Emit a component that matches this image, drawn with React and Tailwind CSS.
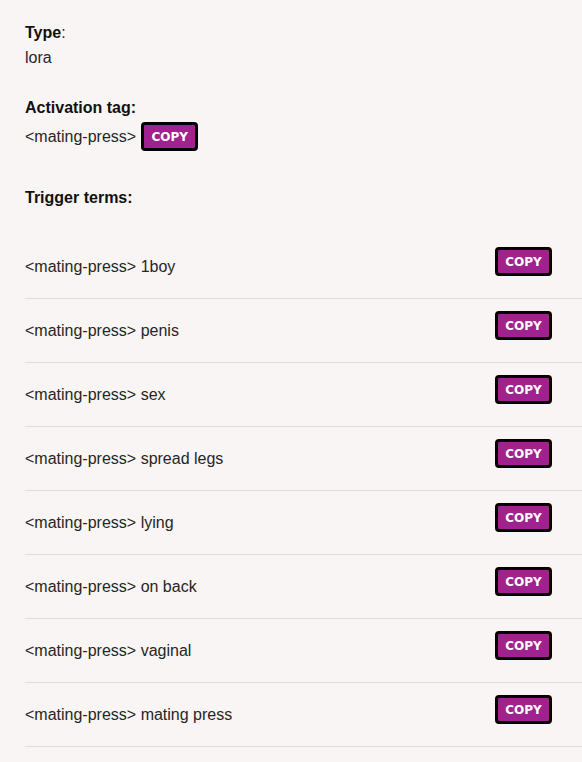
const terms = [
  "1boy",
  "penis",
  "sex",
  "spread legs",
  "lying",
  "on back",
  "vaginal",
  "mating press",
];

const tag = "<mating-press>";

function CopyButton({ className = "" }) {
  return (
    <button
      className={`h-[29px] w-[57px] shrink-0 rounded-[4px] border-[3px] border-black bg-[#a0228e] text-[12px] font-bold uppercase leading-none text-white font-['DejaVu_Sans',sans-serif] ${className}`}
    >
      Copy
    </button>
  );
}

export default function App() {
  return (
    <div className="min-h-[762px] w-full bg-[#f8f5f4] pl-[25px] pt-[21px] text-[16px] text-[#262626] font-['Liberation_Sans',Arial,sans-serif]">
      <div className="leading-6">
        <span className="font-bold text-[#111]">Type</span>:
      </div>
      <div className="mt-[1px] leading-6">lora</div>

      <div className="mt-[26px] font-bold leading-6 text-[#111]">
        Activation tag:
      </div>
      <div className="mt-[2px] flex items-center">
        <span className="leading-6">{tag}</span>
        <CopyButton className="ml-[5px]" />
      </div>

      <div className="mt-[35px] font-bold leading-6 text-[#111]">
        Trigger terms:
      </div>

      <ul className="mt-[25px]">
        {terms.map((t) => (
          <li
            key={t}
            className="flex h-[64px] items-start justify-between border-b border-[#e2dedd] pr-[30px]"
          >
            <span className="mt-[20px] leading-6">
              {tag} {t}
            </span>
            <CopyButton className="mt-[12px]" />
          </li>
        ))}
      </ul>
    </div>
  );
}
